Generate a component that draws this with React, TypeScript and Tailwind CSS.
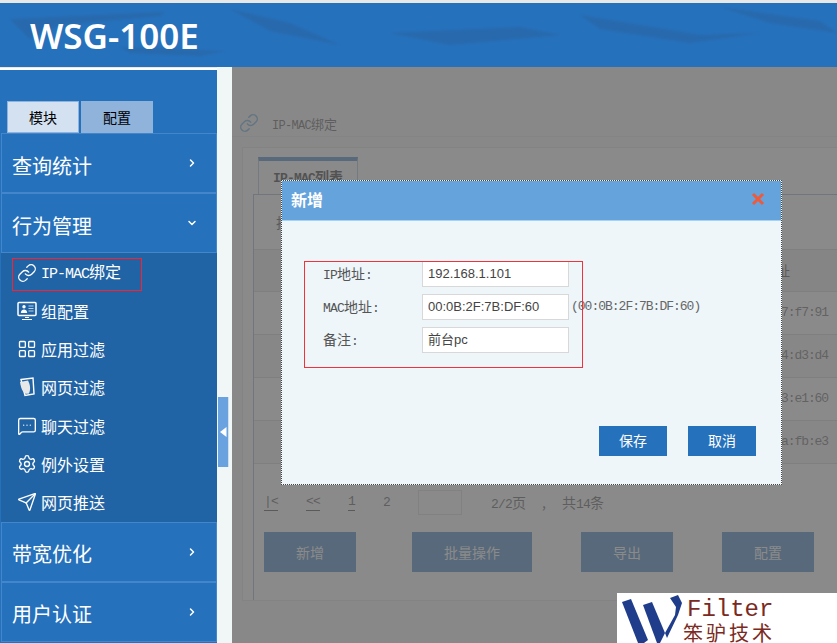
import { ChevronDown, ChevronRight, LayoutGrid, Link, MessageSquareMore, Send, Settings, type LucideIcon } from "lucide-react";
import type { ReactNode } from "react";

function MonitorCard() {
  return (
    <svg width="20" height="20" viewBox="0 0 20 20" fill="none" stroke="white" className="shrink-0">
      <rect x="1" y="1.5" width="18" height="13" rx="1" strokeWidth="1.5" />
      <circle cx="7" cy="5.8" r="1.7" fill="white" stroke="none" />
      <path d="M3.8 12 C4 9.5 5.5 8.6 7 8.6 C8.5 8.6 10 9.5 10.2 12 Z" fill="white" stroke="none" />
      <path d="M11.5 5h5M11.5 7.5h5M11.5 10h5" strokeWidth="1.2" opacity="0.7" />
      <path d="M8 16.5h4M5 18.5h10" strokeWidth="1.2" />
    </svg>
  );
}

function PageIcon() {
  return (
    <svg width="20" height="20" viewBox="0 0 20 20" className="shrink-0">
      <path d="M4 2.5 L16 1 L17 17 L8 18.5 Z" fill="none" stroke="white" strokeWidth="1.4" />
      <path d="M3 5 L11 3.5 C13 7 14 12 12 16.5 C8 18 4.5 15 3 5 Z" fill="#e8e8e8" />
    </svg>
  );
}

function SideHead({ label, open = false, low = false }: { label: string; open?: boolean; low?: boolean }) {
  const Chevron = open ? ChevronDown : ChevronRight;
  return (
    <div className="flex h-[60px] items-center justify-between border border-[#4386cc] pl-[10px] pr-[18px]">
      <span className={`text-[20px] leading-[28px] text-white ${low ? "pt-[3px]" : "pt-[5px]"}`}>{label}</span>
      <Chevron size={12} strokeWidth={3} className="text-white" />
    </div>
  );
}

function SubRow({ icon: IconCmp, custom, children }: { icon?: LucideIcon; custom?: ReactNode; children: ReactNode }) {
  return (
    <div className="flex items-center gap-[4px] pl-[16px] text-[16px] text-white">
      <span className="flex w-[20px] justify-center">
        {custom ?? (IconCmp && <IconCmp size={20} strokeWidth={1.6} />)}
      </span>
      <span className="leading-[20px]">{children}</span>
    </div>
  );
}

function Sidebar() {
  return (
    <aside className="mt-px flex w-[217px] shrink-0 flex-col border-t-2 border-white bg-[#2671bc] pl-px pt-[31px]">
      <div className="flex gap-[2px] pl-[6px]">
        <div className="flex h-[32px] w-[72px] items-center justify-center border border-[#8fb3da] bg-[#d3e1f0] text-[14px] text-black">模块</div>
        <div className="flex h-[32px] w-[72px] items-center justify-center bg-[#8fb3da] text-[14px] text-black">配置</div>
      </div>
      <SideHead label="查询统计" />
      <SideHead label="行为管理" open />
      <div className="relative grid h-[269px] grid-rows-7 bg-[#2164a6] py-px">
        <SubRow icon={Link}>
          <span className="font-['Liberation_Mono'] text-[15px] tracking-[-1px]">IP-MAC</span>绑定
        </SubRow>
        <SubRow custom={<MonitorCard />}>组配置</SubRow>
        <SubRow icon={LayoutGrid}>应用过滤</SubRow>
        <SubRow custom={<PageIcon />}>网页过滤</SubRow>
        <SubRow icon={MessageSquareMore}>聊天过滤</SubRow>
        <SubRow icon={Settings}>例外设置</SubRow>
        <SubRow icon={Send}>网页推送</SubRow>
        <div className="absolute left-[11px] top-[5px] h-[33px] w-[130px] border border-[#ff1f2d]" />
      </div>
      <SideHead label="带宽优化" low />
      <SideHead label="用户认证" low />
    </aside>
  );
}

function TableRow({ text, dark = false }: { text: string; dark?: boolean }) {
  return (
    <div className={`flex h-[43px] items-center justify-end border-b border-[#d0d0d0] pr-[9px] font-['Liberation_Mono'] text-[13px] tracking-[-1.1px] text-[#555] ${dark ? "bg-[#f0f0f0]" : "bg-white"}`}>
      {text}
    </div>
  );
}

function DimButton({ w, children }: { w: string; children: ReactNode }) {
  return <div className={`flex h-[40px] items-center justify-center bg-[#2671bc] text-[14px] text-white ${w}`}>{children}</div>;
}

function PagerLink({ children, className }: { children: ReactNode; className?: string }) {
  return (
    <span className={`whitespace-nowrap font-['Liberation_Mono'] text-[13px] leading-[16px] tracking-[-0.8px] ${className ?? ""}`}>
      {children}
    </span>
  );
}

function BackgroundPage() {
  return (
    <div className="flex h-full flex-col bg-[#f6f6f6]">
      <div className="flex h-[70px] items-end gap-[13px] border-b border-[#e6e6e6] pb-[3px] pl-[7px]">
        <Link size={20} strokeWidth={1.8} className="text-[#5aa0d8]" />
        <span className="-mb-[3px] text-[13px] leading-[20px] text-[#444]">
          <span className="font-['Liberation_Mono'] text-[12px] tracking-[-0.7px]">IP-MAC</span>绑定
        </span>
      </div>
      <div className="ml-[10px] mt-[10px] flex h-[454px] flex-col border border-r-0 border-[#dedede] bg-white pt-[9px]">
        <div className="ml-[15px] flex h-[37px] w-[100px] justify-center border-x border-t-4 border-x-[#9db8d4] border-t-[#2671bc] pt-[6px] text-[14px] font-bold leading-[18px] text-[#111]">
          <span>
            <span className="font-['Liberation_Mono'] text-[13px] tracking-[-0.8px]">IP-MAC</span>列表
          </span>
        </div>
        <div className="ml-[10px] flex flex-1 flex-col border-l border-t border-[#8fa9c4]">
          <div className="flex h-[54px] items-center pl-[22px] text-[14px] text-[#333]">批量操作</div>
          <div className="flex h-[43px] items-center justify-end border-y border-[#d0d0d0] bg-[#e8e8e8] pr-[47px] text-[14px] text-[#333]">址</div>
          <TableRow text="7:f7:91" />
          <TableRow text="4:d3:d4" dark />
          <TableRow text="3:e1:60" />
          <TableRow text="a:fb:e3" dark />
          <div className="mt-[26px] flex h-[25px] items-center pl-[10px] text-[14px] text-[#444]">
            <PagerLink className="w-[14px] border-b border-[#333]">|&lt;</PagerLink>
            <PagerLink className="ml-[28px] w-[14px] border-b border-[#333]">&lt;&lt;</PagerLink>
            <PagerLink className="ml-[28px] border-b border-[#333]">1</PagerLink>
            <PagerLink className="ml-[28px]">2</PagerLink>
            <span className="ml-[28px] h-[25px] w-[44px] border border-[#d8d8d8]" />
            <span className="ml-[29px]">
              <PagerLink>2/2</PagerLink>页
            </span>
            <span className="ml-[16px]">,</span>
            <span className="ml-[16px]">
              共<PagerLink>14</PagerLink>条
            </span>
          </div>
          <div className="mt-[17px] flex pl-[10px]">
            <DimButton w="w-[92px]">新增</DimButton>
            <div className="ml-[56px]">
              <DimButton w="w-[120px]">批量操作</DimButton>
            </div>
            <div className="ml-[49px]">
              <DimButton w="w-[92px]">导出</DimButton>
            </div>
            <div className="ml-[49px]">
              <DimButton w="w-[92px]">配置</DimButton>
            </div>
          </div>
        </div>
      </div>
    </div>
  );
}

function Latin({ children }: { children: ReactNode }) {
  return <span className="font-['Liberation_Mono'] text-[13px] tracking-[-0.8px]">{children}</span>;
}

function FormRow({ label, value, hint }: { label: ReactNode; value: string; hint?: string }) {
  return (
    <div className="flex h-[26px] items-center">
      <div className="w-[99px] text-[14px] text-[#555]">{label}</div>
      <div className="flex h-full w-[147px] items-center border border-[#d8d8d8] bg-white pl-[5px] font-['Liberation_Sans','Noto_Sans_CJK_SC',sans-serif] text-[13px] text-[#444]">
        {value}
      </div>
      {hint && <div className="ml-[2px] font-['Liberation_Mono'] text-[13px] tracking-[-1px] text-[#666]">{hint}</div>}
    </div>
  );
}

function Dialog() {
  return (
    <div className="absolute left-[281px] top-[180px] flex h-[305px] w-[501px] flex-col border border-dotted border-[#444] bg-[#eef6fa]">
      <div className="flex h-[40px] items-center justify-between border-b border-[#a5d3f2] bg-[#64a3dc] pb-[3px] pl-[9px] pr-[16px]">
        <span className="text-[16px] font-bold text-white">新增</span>
        <svg width="14" height="14" viewBox="0 0 14 14" stroke="#ee5a3c" strokeWidth="3">
          <path d="M2 2 L12 12 M12 2 L2 12" />
        </svg>
      </div>
      <div className="relative flex flex-1 flex-col pl-[41px] pt-[40px]">
        <div className="flex flex-col gap-[7px]">
          <FormRow label={<><Latin>IP</Latin>地址<Latin>:</Latin></>} value="192.168.1.101" />
          <FormRow label={<><Latin>MAC</Latin>地址<Latin>:</Latin></>} value="00:0B:2F:7B:DF:60" hint="(00:0B:2F:7B:DF:60)" />
          <FormRow label={<>备注<Latin>:</Latin></>} value="前台pc" />
        </div>
        <div className="mt-auto flex justify-end gap-[21px] pb-[28px] pr-[25px]">
          <div className="flex h-[30px] w-[68px] items-center justify-center bg-[#2671bc] pb-[2px] text-[14px] text-white">保存</div>
          <div className="flex h-[30px] w-[68px] items-center justify-center bg-[#2671bc] pb-[2px] text-[14px] text-white">取消</div>
        </div>
        <div className="absolute left-[22px] top-[40px] h-[107px] w-[279px] border border-[#f0333a]" />
      </div>
    </div>
  );
}

function LogoBadge() {
  return (
    <div className="absolute bottom-0 right-0 flex h-[50px] w-[220px] bg-white">
      <svg width="66" height="50" viewBox="0 0 66 50" fill="#1f3d8a" className="shrink-0">
        <path d="M5 9 L14 6 L31 47 L27 50 L21 50 Z" />
        <path d="M26 12 L35 9 L48 40 L43 50 L40 50 Z" />
        <path d="M53 5 L61 2 L65 10 L61 22 L50 45 L48 40 L58 22 L59 14 Z" />
      </svg>
      <div className="flex flex-col pt-[5px] text-[#7a2a22]">
        <span className="ml-[4px] font-['Liberation_Mono'] text-[24px] leading-[24px]">Filter</span>
        <span className="mt-px text-[20px] leading-[20px] tracking-[3px]">笨驴技术</span>
      </div>
    </div>
  );
}

export default function App() {
  return (
    <div className="relative flex h-[643px] w-[837px] flex-col overflow-hidden bg-[#e8e8e8] font-['Noto_Sans_CJK_SC',sans-serif]">
      <header className="relative mt-[3px] flex h-[64px] shrink-0 items-center overflow-hidden bg-[#2671bc] pl-[30px] pt-[2px]">
        <svg width="837" height="64" viewBox="0 0 837 64" className="absolute left-0 top-0 blur-[1px]" fill="#2a5f96" opacity="0.4">
          <path d="M10 16 L165 9 L160 13 L60 22 L30 36 Z" />
          <path d="M120 44 L225 48 L200 53 L130 50 Z" />
          <path d="M230 6 L290 20 L340 42 L270 28 Z" />
          <path d="M390 30 L520 24 L560 32 L450 42 Z" />
          <path d="M580 12 L700 32 L760 30 L690 40 L600 26 Z" />
          <path d="M720 4 L820 18 L837 30 L770 20 Z" />
        </svg>
        <span className="relative font-['Noto_Sans'] text-[35px] font-semibold leading-[40px] text-white">WSG-100E</span>
      </header>
      <div className="flex min-h-0 flex-1">
        <Sidebar />
        <div className="w-[15px] shrink-0 bg-[#f0f7f6] pl-px pt-[330px]">
          <div className="flex h-[70px] w-[11px] items-center justify-center border-r border-[#cfe0ee] bg-[#6aa2e0]">
            <svg width="7" height="10" viewBox="0 0 7 10" fill="white">
              <path d="M6.5 0 L0 5 L6.5 10 Z" />
            </svg>
          </div>
        </div>
        <main className="relative min-w-0 flex-1">
          <BackgroundPage />
          <div className="absolute inset-0 bg-[#676767]/[0.77]" />
        </main>
      </div>
      <Dialog />
      <LogoBadge />
    </div>
  );
}
